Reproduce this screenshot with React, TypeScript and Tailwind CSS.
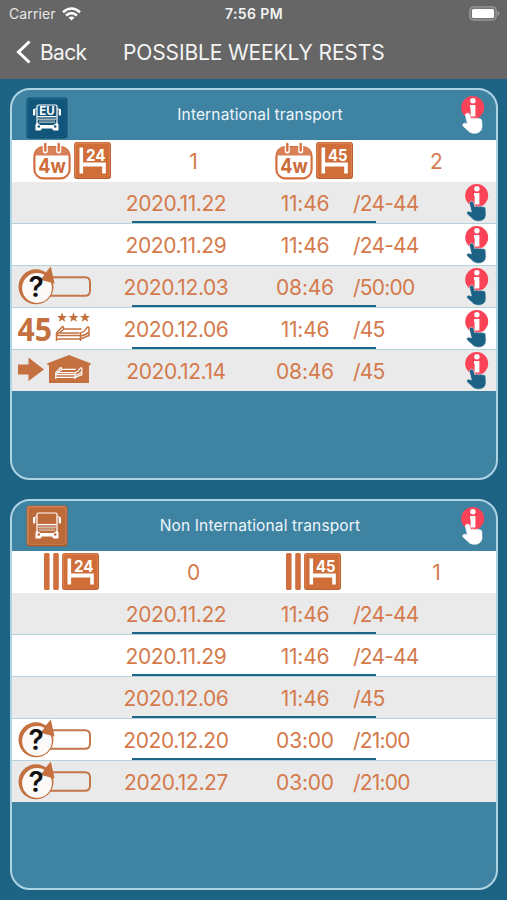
import type { ReactNode } from 'react';

type RowIcon = 'question' | 'rated-bed' | 'home-bed';

interface RestRow {
  date: string;
  time: string;
  duration: string;
  icon?: RowIcon;
  info?: boolean;
  underline?: boolean;
}

const internationalRows: RestRow[] = [
  { date: '2020.11.22', time: '11:46', duration: '/24-44', info: true, underline: true },
  { date: '2020.11.29', time: '11:46', duration: '/24-44', info: true },
  { date: '2020.12.03', time: '08:46', duration: '/50:00', icon: 'question', info: true, underline: true },
  { date: '2020.12.06', time: '11:46', duration: '/45', icon: 'rated-bed', info: true, underline: true },
  { date: '2020.12.14', time: '08:46', duration: '/45', icon: 'home-bed', info: true },
];

const domesticRows: RestRow[] = [
  { date: '2020.11.22', time: '11:46', duration: '/24-44', underline: true },
  { date: '2020.11.29', time: '11:46', duration: '/24-44', underline: true },
  { date: '2020.12.06', time: '11:46', duration: '/45', underline: true },
  { date: '2020.12.20', time: '03:00', duration: '/21:00', icon: 'question', underline: true },
  { date: '2020.12.27', time: '03:00', duration: '/21:00', icon: 'question' },
];

function InfoIcon({ hand, outline }: { hand: string; outline: string }) {
  return (
    <svg width="24" height="38" viewBox="0 0 24 38">
      <circle cx="11.7" cy="11.6" r="11.5" fill="#fb4357" />
      <circle cx="11.9" cy="4.8" r="2.7" fill="#fff" />
      <path d="M9 9h5.4v11.5H9.6v-8.6H9z" fill="#fff" />
      <path
        d="M4.400 19.200C4 16.900 8.200 16.400 8.700 18.600L9.800 22.700C11 21.900 12.600 21.900 13.400 22.700C14.800 21.900 16.200 22 17 22.700C19 22.200 20.700 23.200 20.800 25.200L21 30.500C21 34.800 17.800 37.300 13.800 37.300C11 37.300 8.700 36.500 7.200 34.700L2.200 30.200C.8 28.400 3 26.600 4.800 27.400L6.400 28Z"
        fill={hand}
        stroke={outline}
        strokeWidth="0.6"
      />
    </svg>
  );
}

function TruckIcon({ eu }: { eu?: boolean }) {
  const body = eu ? '#11557a' : '#bd6a3b';
  return (
    <svg width="42" height="42" viewBox="0 0 42 42" className={eu ? 'mt-[5px]' : ''}>
      <rect x="0.5" y="0.5" width="41" height="41" rx="3" fill={eu ? '#0f4e70' : '#a85c30'} />
      <rect x="1" y="1" width="39.5" height="39" rx="3" fill={eu ? '#1a6085' : '#d08255'} />
      <rect x="2.5" y="2.5" width="37" height="37" rx="2" fill={body} />
      <g fill="none" stroke="#fff" strokeWidth="1.2">
        <path d="M11 26V9.500q0-1.500 1.500-1.500h17q1.500 0 1.500 1.500V26" />
        <path d="M11 12H8.500M31 12h2.500" />
        <path d="M11.500 19.500h19" />
      </g>
      <g stroke="#dcd6d2" strokeWidth="0.7">
        <path d="M12 21h18M12 22.500h18M13 24h16M13 25.400h16" />
      </g>
      <rect x="7" y="12" width="2.300" height="6.500" rx="0.800" fill="#fff" />
      <rect x="32.700" y="12" width="2.300" height="6.500" rx="0.800" fill="#fff" />
      <path d="M11 25.500l3.500 2.500h13l3.500-2.500 1.500 2v6h-5l-1.500-2h-10l-1.500 2h-5v-6z" fill="#fff" />
      <circle cx="12.800" cy="29.500" r="1.300" fill={body} />
      <circle cx="29.200" cy="29.500" r="1.300" fill={body} />
      {eu && (
        <text x="21" y="17.800" textAnchor="middle" fontSize="11.500" fontWeight="700" fontFamily="Inter, sans-serif" fill="#fff">
          EU
        </text>
      )}
    </svg>
  );
}

function CalendarIcon() {
  return (
    <svg width="38" height="38" viewBox="0 0 38 38">
      <rect x="1.400" y="5.200" width="35.200" height="31.200" rx="9" fill="#fff" stroke="#d2703f" strokeWidth="2.200" />
      <path d="M2 13.500C2 8 5.500 5.200 10.400 5.200h17.200C32.500 5.200 36 8 36 13.500z" fill="#da8058" />
      <g stroke="#fff" strokeWidth="5" strokeLinecap="round">
        <path d="M12.300 5v4M25.700 5v4" />
      </g>
      <g stroke="#d2703f" strokeWidth="2.400" strokeLinecap="round">
        <path d="M12.300 2v6.500M25.700 2v6.500" />
      </g>
      <text x="19" y="30.500" textAnchor="middle" fontSize="20" fontWeight="700" fontFamily="Inter, sans-serif" fill="#cb6c39" textLength="27.500" lengthAdjust="spacingAndGlyphs">
        4w
      </text>
    </svg>
  );
}

function BedBadge({ hours }: { hours: string }) {
  return (
    <svg width="37" height="37" viewBox="0 0 37 37">
      <rect width="37" height="37" rx="3" fill="#bc602f" />
      <rect x="0.500" y="0.500" width="35.500" height="35" rx="3" fill="#dc8150" />
      <rect x="2" y="2" width="33" height="33" rx="2" fill="#d06e39" />
      <path d="M5.500 5.500h3.600v15h22.700V31.500h-3.600v-7H9.100v7H5.500z" fill="#fff" />
      <text x="21.700" y="18.600" textAnchor="middle" fontSize="16.500" fontWeight="700" fontFamily="Inter, sans-serif" fill="#fff" textLength="19.500" lengthAdjust="spacingAndGlyphs">
        {hours}
      </text>
    </svg>
  );
}

function DoubleBar() {
  return (
    <svg width="15" height="37" viewBox="0 0 15 37">
      <rect x="0" y="0" width="5.600" height="37" rx="1.500" fill="#d0703f" />
      <rect x="9.200" y="0" width="5.600" height="37" rx="1.500" fill="#d0703f" />
    </svg>
  );
}

function Bed({ color }: { color: string }) {
  return (
    <g fill="none" stroke={color} strokeWidth="1.500" strokeLinejoin="round">
      <path d="M1 17.500V9.500L6.500 3.500q1.500-1 1.500.5V6L1.500 11" />
      <path d="M1 12h24M1 15.500h24M8 5.500h18M4 9.500h20" />
      <path d="M25 17.500V9.500q4-1 6.500-5.500 2-1 2 .5v8.500M25 12.500q5-.5 8.500-4M25 15.500l8.500-3.500" />
    </g>
  );
}

function QuestionIcon() {
  return (
    <svg width="76" height="42" viewBox="0 0 76 42">
      <path d="M34 11.200h33q5 0 5 5v8.500q0 5-5 5H32" fill="none" stroke="#c47649" strokeWidth="2" />
      <circle cx="18" cy="20.800" r="17.500" fill="#c4703f" />
      <circle cx="19" cy="22" r="14.900" fill="#fbfaf9" />
      <path d="M32.800.5l3.800 17-14.500-3.800q4-3.500 6.500-8.200z" fill="#c4703f" />
      <text x="18" y="30.800" textAnchor="middle" fontSize="28" fontWeight="600" fontFamily="Inter, sans-serif" fill="#111">
        ?
      </text>
    </svg>
  );
}

function RatedBedIcon() {
  const star = 'M0-5 1.400-1.600 5-1.500 2.200.8 3.200 4.300 0 2.300-3.200 4.300-2.200.8-5-1.500-1.400-1.600z';
  return (
    <svg width="76" height="42" viewBox="0 0 76 42">
      <text x="-0.500" y="32.500" fontSize="32" fontWeight="700" fontFamily="'Open Sans', sans-serif" fill="#c4703f" textLength="34.500" lengthAdjust="spacingAndGlyphs">
        45
      </text>
      {[44, 55.5, 67].map((x) => (
        <path key={x} d={star} transform={`translate(${x} 9.500)`} fill="#c4703f" />
      ))}
      <g transform="translate(37.500 15.500)">
        <Bed color="#c4703f" />
      </g>
    </svg>
  );
}

function HomeBedIcon() {
  return (
    <svg width="76" height="42" viewBox="0 0 76 42">
      <path d="M0 14.500h10.500V7.500L26 19.500 10.500 31v-6.500H0z" fill="#c4703f" />
      <path d="M51 5l22 8.500-1 2-1-.4V33H31V15.100l-1 .4-1-2z" fill="#c4703f" />
      <g transform="translate(37 15) scale(.8)">
        <Bed color="#fff" />
      </g>
    </svg>
  );
}

const rowIcons: Record<RowIcon, ReactNode> = {
  question: <QuestionIcon />,
  'rated-bed': <RatedBedIcon />,
  'home-bed': <HomeBedIcon />,
};

function Row({ row }: { row: RestRow }) {
  return (
    <li className="relative flex h-[42px] items-center border-b border-[#b5d3dd] odd:bg-[#eaeaea] even:bg-white last:h-[41px] last:border-b-0 text-[21px] text-[#d47a4c]">
      <div className="w-[99px] pl-[6px]">{row.icon && rowIcons[row.icon]}</div>
      <span className="w-[130px] pt-[2px] text-center tracking-[-0.4px]">{row.date}</span>
      <span className="ml-[15px] w-[98px] pt-[2px] text-center tracking-[-0.2px]">{row.time}</span>
      <span className="-ml-px flex-1 pt-[2px] tracking-[-0.8px]">{row.duration}</span>
      {row.info && (
        <div className="pr-[7px]">
          <InfoIcon hand="#1b6285" outline="#f1f1f1" />
        </div>
      )}
      {row.underline && <div className="absolute bottom-0 left-[120px] h-[2px] w-[244px] bg-[#1f6587]" />}
    </li>
  );
}

interface CardProps {
  title: string;
  icon: ReactNode;
  marker: ReactNode;
  count24: number;
  count45: number;
  rows: RestRow[];
  className: string;
}

function RestCard({ title, icon, marker, count24, count45, rows, className }: CardProps) {
  return (
    <section className={`overflow-hidden rounded-[20px] border-2 border-[#aed3e5] bg-[#3f83a3] ${className}`}>
      <header className="flex h-[50px] items-center pl-[14px] pr-[11px]">
        {icon}
        <h2 className="flex-1 pr-[9px] text-center text-[15.5px] tracking-[0.14px] text-[#eef6fa]">{title}</h2>
        <InfoIcon hand="#fff" outline="#fff" />
      </header>
      <div className="grid h-[42px] grid-cols-4 items-center bg-white text-center text-[21px] text-[#d47a4c]">
        <div className="flex items-center justify-center gap-[3px] pb-px pr-[2px]">
          {marker}
          <BedBadge hours="24" />
        </div>
        <span className="pt-px">{count24}</span>
        <div className="flex items-center justify-center gap-[3px] pb-px pr-[2px]">
          {marker}
          <BedBadge hours="45" />
        </div>
        <span className="pl-[2px] pt-px">{count45}</span>
      </div>
      <ul>
        {rows.map((row) => (
          <Row key={row.date} row={row} />
        ))}
      </ul>
    </section>
  );
}

export default function App() {
  return (
    <div className="h-[900px] w-[507px] overflow-hidden bg-[#1d6384] font-['Inter',sans-serif]">
      <div className="h-[79px] bg-[#666666] text-[#f4f4f4]">
        <div className="grid h-[27px] grid-cols-3 items-center pl-[9px] pr-[7px] text-[14px]">
          <div className="flex items-center gap-[6px] text-[#e6e6e6]">
            <span className="tracking-[0.1px]">Carrier</span>
            <svg width="19" height="14" viewBox="0 0 19 14" fill="none" stroke="#fff" strokeWidth="2.600">
              <path d="M1 5.300Q9.500-2.300 18 5.300" />
              <path d="M4 8.600q5.500-4.800 11 0" />
              <path d="M9.500 13.500L6.500 10.600q3-2.300 6 0z" fill="#fff" stroke="none" />
            </svg>
          </div>
          <span className="pr-px text-center font-semibold tracking-[0.4px]">7:56 PM</span>
          <svg className="justify-self-end" width="31" height="15" viewBox="0 0 31 15">
            <rect x="0.800" y="0.800" width="26.400" height="13.400" rx="4" fill="#777" stroke="#999" strokeWidth="1.300" />
            <rect x="3" y="3" width="22" height="9" rx="1.500" fill="#fff" />
            <path d="M28.500 5q2 .8 2 2.500t-2 2.500z" fill="#999" />
          </svg>
        </div>
        <div className="flex h-[50px] items-center text-[21px]">
          <button className="flex w-[91px] items-center gap-[9px] pl-4">
            <svg width="15" height="24" viewBox="0 0 15 24" fill="none" stroke="#fff" strokeWidth="3">
              <path d="M13.500 1.500L2.500 12l11 10.500" />
            </svg>
            <span className="pt-px tracking-[-0.7px]">Back</span>
          </button>
          <h1 className="ml-[32px] pt-px tracking-[-0.13px]">POSSIBLE WEEKLY RESTS</h1>
        </div>
      </div>
      <main className="flex flex-col gap-[19px] pl-[10px] pr-[9px] pt-[9px]">
        <RestCard
          title="International transport"
          icon={<TruckIcon eu />}
          marker={<CalendarIcon />}
          count24={1}
          count45={2}
          rows={internationalRows}
          className="h-[392px]"
        />
        <RestCard
          title="Non International transport"
          icon={<TruckIcon />}
          marker={<DoubleBar />}
          count24={0}
          count45={1}
          rows={domesticRows}
          className="h-[391px]"
        />
      </main>
    </div>
  );
}
